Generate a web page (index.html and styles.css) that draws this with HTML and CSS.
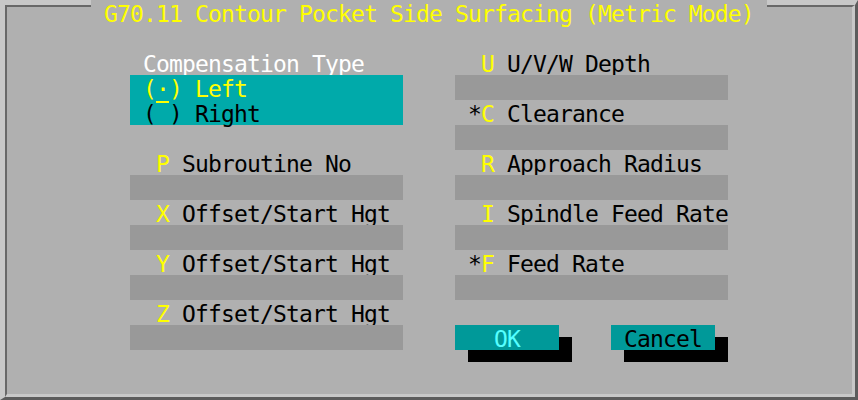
FILE: index.html
```html
<!DOCTYPE html>
<html lang="en">
<head>
    <meta charset="UTF-8">
    <title>G70.11 Contour Pocket Side Surfacing</title>
    <link rel="stylesheet" href="styles.css">
</head>
<body>
    <div class="screen">
        <div class="title"> G70.11 Contour Pocket Side Surfacing (Metric Mode) </div>

        <div class="panel">
            <!-- Left column -->
            <div class="col">
                <div class="row heading"> Compensation Type</div>
                <div class="radios">
                    <div class="row on"> (<span class="cursor">·</span>) Left</div>
                    <div class="row"> ( ) Right</div>
                </div>
                <div class="spacer"></div>

                <div class="row">  <span class="key">P</span> Subroutine No</div>
                <div class="field"></div>
                <div class="row">  <span class="key">X</span> Offset/Start Hgt</div>
                <div class="field"></div>
                <div class="row">  <span class="key">Y</span> Offset/Start Hgt</div>
                <div class="field"></div>
                <div class="row">  <span class="key">Z</span> Offset/Start Hgt</div>
                <div class="field"></div>
            </div>

            <!-- Right column -->
            <div class="col">
                <div class="row">  <span class="key">U</span> U/V/W Depth</div>
                <div class="field"></div>
                <div class="row"> *<span class="key">C</span> Clearance</div>
                <div class="field"></div>
                <div class="row">  <span class="key">R</span> Approach Radius</div>
                <div class="field"></div>
                <div class="row">  <span class="key">I</span> Spindle Feed Rate</div>
                <div class="field"></div>
                <div class="row"> *<span class="key">F</span> Feed Rate</div>
                <div class="field"></div>
                <div class="spacer"></div>

                <div class="buttons">
                    <div class="row btn btn-ok">   OK</div>
                    <div class="row btn"> Cancel</div>
                </div>
            </div>
        </div>
    </div>
</body>
</html>
```

FILE: styles.css
```css
/* Text-mode dialog: every character cell is 13 x 25 px */
body {
    margin: 0;
    font-family: "DejaVu Sans Mono", monospace;
    font-size: 23px;
    letter-spacing: -0.85px;
    color: #000000;
}

.screen {
    position: relative;
    width: 858px;
    height: 400px;
    box-sizing: border-box;
    background-color: #b0b0b0;
    border-style: solid;
    border-width: 5px 3px 3px 5px;
    border-color: #c8c8c8 #5c5c5c #5c5c5c #c8c8c8; /* raised outer edge */
}

.panel {
    height: 100%;
    box-sizing: border-box;
    border-style: solid;
    border-width: 2px 3px 3px 2px;
    border-color: #686868 #c8c8c8 #c8c8c8 #686868; /* sunken inner edge */
    padding: 43px 0 0 123px;
    display: flex;
    gap: 52px;
}

/* Title sits on top of the frame and hides it */
.title {
    position: absolute;
    top: -5px;
    left: 86px;
    width: 676px;
    height: 25px;
    box-sizing: border-box;
    padding-top: 2px;
    line-height: 24px;
    white-space: pre;
    background-color: #b0b0b0;
    color: #ffff00;
}

.col {
    width: 273px;
    display: flex;
    flex-direction: column;
}

.row {
    height: 25px;
    box-sizing: border-box;
    padding-top: 2px;
    line-height: 24px;
    white-space: pre;
}

.spacer {
    height: 25px;
}

.field {
    height: 25px;
    background-color: #999999;
}

.heading {
    color: #ffffff;
}

.key {
    color: #ffff00;
}

.radios {
    background-color: #00aaaa;
}

.on {
    color: #ffff00;
}

.cursor {
    text-decoration: underline;
    text-decoration-thickness: 2px;
    text-underline-offset: 4px;
}

.buttons {
    display: flex;
    gap: 52px;
}

.btn {
    width: 104px;
    background-color: #009999;
    box-shadow: 13px 12px 0 #000000;
}

.btn-ok {
    color: #55ffff;
}
```
